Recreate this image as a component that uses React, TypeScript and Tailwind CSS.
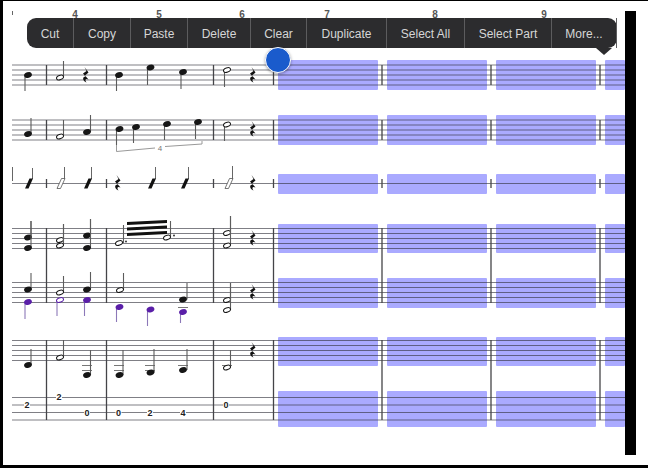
import React from "react";

const INK = "#161616";
const PURPLE = "#5a1fa8";
const BARS = [46.5, 106.5, 213.5, 273.5, 382, 491, 600];
const SELECTIONS = [
  [278, 100],
  [387, 100],
  [496, 100],
  [605, 20],
];

type Note = { x: number; y: number; stemX: number; stemTo: number; half?: boolean; color?: string };

const n = (x: number, y: number, stemX: number, stemTo: number, half = false, color = INK): Note => ({
  x,
  y,
  stemX,
  stemTo,
  half,
  color,
});

const NOTES: Note[] = [
  // staff 1
  n(28, 75, 25, 91),
  n(60, 77.5, 63.5, 61, true),
  n(119, 75, 116.5, 91),
  n(150.5, 67.5, 147.5, 85),
  n(183, 72, 181, 89),
  n(227, 70, 224.5, 87, true),
  // staff 2
  n(28, 134, 31, 118),
  n(60, 136.5, 63.5, 120, true),
  n(87, 132, 90.5, 115),
  n(119.5, 129, 116.5, 145),
  n(136, 127, 133.5, 143),
  n(167, 124, 164.5, 140),
  n(198, 122, 195.5, 139),
  n(227, 124.5, 224.5, 141, true),
  // staff 4
  n(28, 237.5, 31, 221),
  n(28, 248, 31, 221),
  n(60, 240, 63.5, 224, true),
  n(60, 245.5, 63.5, 224, true),
  n(87, 235.5, 90.5, 219),
  n(87, 248, 90.5, 219),
  n(119, 243, 123.5, 225, true),
  n(167, 237.5, 170.5, 221, true),
  n(227, 233, 230.5, 216, true),
  n(227, 245.5, 230.5, 216, true),
  // staff 5
  n(28, 289.5, 31, 273),
  n(60, 292.5, 63.5, 276, true),
  n(87, 289.5, 90.5, 272),
  n(120, 290, 123.5, 273, true),
  n(183, 299.5, 187, 283),
  n(227, 300, 230.5, 283, true),
  n(227, 310, 230.5, 283, true),
  n(28, 302, 25, 319, false, PURPLE),
  n(60, 300, 57, 316, true, PURPLE),
  n(87, 300, 84.5, 316, false, PURPLE),
  n(119.5, 307, 116.5, 322, false, PURPLE),
  n(150.5, 309.5, 147.5, 326, false, PURPLE),
  n(183, 312, 180.5, 323, false, PURPLE),
  // staff 6
  n(28, 365, 31, 349),
  n(60, 357.5, 63.5, 340, true),
  n(87, 375, 90.5, 350),
  n(119.5, 375, 123, 350),
  n(150.5, 372.5, 154, 349),
  n(183, 370, 187, 349),
  n(227, 367.5, 230.5, 350, true),
];

const LEDGERS = [
  [178, 307],
  [82, 365],
  [82, 370],
  [114, 365],
  [114, 370],
  [145, 365],
  [145, 370],
  [178, 365],
  [222, 365],
];

const RESTS = [
  [86, 75],
  [253, 75],
  [253, 129],
  [118, 183],
  [253, 183],
  [253, 238],
  [253, 292],
  [253, 350],
];

const SLASHES = [
  [25, 168, false],
  [57, 167, true],
  [84, 167, false],
  [148, 167, false],
  [181, 167, false],
  [225, 166, true],
] as const;

const TAB_NUMBERS = [
  [27, 405, "2"],
  [59, 397, "2"],
  [87, 412.5, "0"],
  [118.5, 412.5, "0"],
  [150, 412.5, "2"],
  [183, 412.5, "4"],
  [226, 405, "0"],
] as const;

const MENU = [
  ["Cut", "w-[47px]"],
  ["Copy", "w-[57px]"],
  ["Paste", "w-[57px]"],
  ["Delete", "w-[63px]"],
  ["Clear", "w-[56px]"],
  ["Duplicate", "w-[80px]"],
  ["Select All", "w-[78px]"],
  ["Select Part", "w-[87px]"],
  ["More...", "flex-1"],
];

function Staff({ top, gap = 5, count = 5, rectTop, rectH }: { top: number; gap?: number; count?: number; rectTop: number; rectH: number }) {
  return (
    <g>
      {SELECTIONS.map(([x, w]) => (
        <rect key={x} x={x} y={rectTop} width={w} height={rectH} rx="1" fill="#aaaaff" />
      ))}
      {Array.from({ length: count }, (_, i) => (
        <line key={i} x1="12" x2="625" y1={top + i * gap} y2={top + i * gap} stroke="#30303a" strokeOpacity="0.62" strokeWidth="1" />
      ))}
    </g>
  );
}

function Rest({ x, y }: { x: number; y: number }) {
  return (
    <path
      d={`M${x - 1.5} ${y - 8} L${x + 2.5} ${y - 2.5} L${x - 1} ${y + 0.5} L${x + 2.5} ${y + 4.5} C${x - 0.5} ${y + 3} ${x - 1.5} ${y + 5} ${x + 0.5} ${y + 7.5} C${x - 4} ${y + 5.5} ${x - 3.5} ${y + 1.5} ${x - 0.5} ${y + 1.5} L${x - 3} ${y - 1.5} L${x + 0.5} ${y - 4} Z`}
      fill="#111"
    />
  );
}

function NoteGlyph({ note }: { note: Note }) {
  const { x, y, stemX, stemTo, half, color } = note;
  return (
    <g>
      <line x1={stemX} x2={stemX} y1={y} y2={stemTo} stroke={color === PURPLE ? "#8c78b8" : "#5c5c5c"} strokeWidth="1.1" />
      {half ? (
        <ellipse cx={x} cy={y} rx="3.6" ry="2.2" transform={`rotate(-20 ${x} ${y})`} fill="#fff" stroke={color} strokeWidth="1" />
      ) : (
        <ellipse cx={x} cy={y} rx="4" ry="2.8" transform={`rotate(-20 ${x} ${y})`} fill={color} />
      )}
    </g>
  );
}

function Score() {
  return (
    <svg width="622" height="464" viewBox="3 1 622 464" className="block shrink-0">
      {/* measure numbers, mostly hidden by the menu */}
      <g fontFamily="'Liberation Sans', sans-serif" fontSize="10" fontWeight="700" fill="#555" textAnchor="middle">
        {[
          [75, "4"],
          [159, "5"],
          [242, "6"],
          [327, "7"],
          [435, "8"],
          [544, "9"],
        ].map(([x, t]) => (
          <text key={t} x={x} y="18">
            {t}
          </text>
        ))}
      </g>
      <line x1="12.5" x2="12.5" y1="11" y2="15" stroke="#666" />

      <Staff top={65} rectTop={60} rectH={30} />
      <Staff top={120} rectTop={115} rectH={30} />
      <Staff top={183.5} count={1} rectTop={174} rectH={20} />
      <Staff top={228.5} rectTop={224} rectH={29} />
      <Staff top={282.5} rectTop={278} rectH={30} />
      <Staff top={340.5} rectTop={337} rectH={29} />
      <Staff top={397.5} gap={7.5} count={4} rectTop={391} rectH={36} />

      {BARS.map((x) => (
        <g key={x} stroke="#444448" strokeWidth="1.3">
          <line x1={x} x2={x} y1="65" y2="85" />
          <line x1={x} x2={x} y1="120" y2="140" />
          <line x1={x} x2={x} y1="179" y2="188" />
          <line x1={x} x2={x} y1="228" y2="303" />
          <line x1={x} x2={x} y1="340" y2="420" />
        </g>
      ))}
      <line x1="12.5" x2="12.5" y1="167" y2="181" stroke="#666" />

      {LEDGERS.map(([x, y]) => (
        <line key={`${x}-${y}`} x1={x} x2={x + 10} y1={y + 0.5} y2={y + 0.5} stroke="#777" />
      ))}
      {NOTES.map((note, i) => (
        <NoteGlyph key={i} note={note} />
      ))}
      {RESTS.map(([x, y]) => (
        <Rest key={`${x}-${y}`} x={x} y={y} />
      ))}

      {/* slashes on the rhythm staff */}
      {SLASHES.map(([x, top, hollow]) => (
        <g key={x}>
          <line x1={x + 7.5} x2={x + 7.5} y1={top} y2="179" stroke="#666" />
          <path
            d={`M${x} 188.5 L${x + 3.5} 188.5 L${x + 8} 178.5 L${x + 4.5} 178.5 Z`}
            fill={hollow ? "#fff" : "#111"}
            stroke={hollow ? "#555" : "none"}
            strokeWidth="0.8"
          />
        </g>
      ))}

      {/* tuplet bracket */}
      <path d="M116.5 145 V151.5 L155 148" fill="none" stroke="#999" />
      <path d="M165 146.5 L202 144 V141" fill="none" stroke="#999" />
      <text x="160" y="151" fontSize="8" fill="#777" textAnchor="middle" fontFamily="'Liberation Sans', sans-serif">
        4
      </text>

      {/* tremolo beams */}
      <path d="M127 222 L167 220 V223 L127 225 Z M127 227.5 L167 225.5 V228.5 L127 230.5 Z M127 233 L167 231 V234 L127 236 Z" fill="#111" />
      <circle cx="126" cy="241.5" r="0.9" fill="#222" />
      <circle cx="174" cy="235.5" r="0.9" fill="#222" />

      {/* tablature */}
      <g fontFamily="'Liberation Sans', sans-serif" fontSize="9" fontWeight="700" fill="#222" textAnchor="middle">
        {TAB_NUMBERS.map(([x, y, t]) => (
          <g key={`${x}-${y}`}>
            <rect x={x - 3} y={y - 4} width="6" height="8" fill="#fff" />
            <text x={x} y={y + 3.2}>
              {t}
            </text>
          </g>
        ))}
      </g>
    </svg>
  );
}

export default function App() {
  return (
    <div className="relative h-[468px] w-[648px] overflow-hidden border-t border-b-[3px] border-l-[3px] border-black bg-white font-['Liberation_Sans',sans-serif]">
      <div className="flex items-start">
        <Score />
        <div className="mt-[10px] h-[444px] w-[11px] bg-black" />
      </div>

      {/* edit menu */}
      <div className="absolute top-[17px] left-[24px] flex h-[30px] w-[590px] rounded-[9px] bg-[#2c2c2e]">
        {MENU.map(([label, width]) => (
          <div
            key={label}
            className={`flex items-center justify-center border-r border-[#5c5c5e] pt-px text-[12px] text-[#d6d6d6] last:border-r-0 ${width}`}
          >
            {label}
          </div>
        ))}
        <div className="absolute top-[30px] left-[569px] h-0 w-0 border-x-[8px] border-t-[7px] border-x-transparent border-t-[#2c2c2e]" />
      </div>

      {/* selection handle */}
      <div className="absolute top-[46px] left-[262px] h-[26px] w-[26px] rounded-full border-[1.5px] border-white bg-[#1a5bcc] shadow-[0_1px_3px_rgba(0,0,0,0.35)]" />
    </div>
  );
}
